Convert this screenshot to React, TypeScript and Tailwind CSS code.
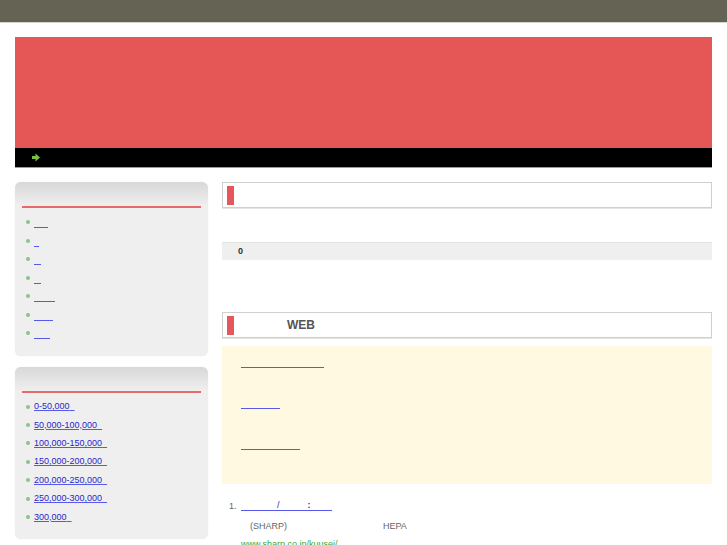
import React from 'react';

// Japanese labels do not render in the source page, so link text is shown as blank underlined runs.
const menuLinks = ['w-[14px]', 'w-[5px]', 'w-[7px]', 'w-[7px]', 'w-[21px]', 'w-[19px]', 'w-[16px]'];

const priceLinks = [
  '0-50,000',
  '50,000-100,000',
  '100,000-150,000',
  '150,000-200,000',
  '200,000-250,000',
  '250,000-300,000',
  '300,000',
];

const featureLinks = ['w-[83px]', 'w-[39px]', 'w-[59px]'];

const Dot = () => <span className="mr-[4px] inline-block h-[4px] w-[4px] shrink-0 rounded-full bg-[#86c686]" />;

const SideBox: React.FC<{ children: React.ReactNode }> = ({ children }) => (
  <div className="rounded-[6px] bg-[#efefef] shadow-[0_0_1px_rgba(0,0,0,0.12)]">
    <div className="h-[24px] rounded-t-[6px] bg-linear-to-b from-[#d8d8d8] to-[#efefef]" />
    <div className="mx-[7px] h-[2px] bg-[#e86a6a]" />
    <ul className="pt-[5px] pb-[13px] pl-[11px]">{children}</ul>
  </div>
);

const Heading: React.FC<{ children?: React.ReactNode }> = ({ children }) => (
  <div className="flex h-[26px] items-center border border-[#cfcfcf] bg-white pl-[4px] shadow-[0_1px_0_#e4e4e4]">
    <span className="h-[19px] w-[7px] bg-[#e5575a]" />
    {children}
  </div>
);

export default function App() {
  return (
    <div className="min-h-[545px] bg-white font-['Liberation_Sans',Arial,sans-serif] text-[9px] text-[#666]">
      {/* top strip */}
      <div className="h-[23px] border-b border-[#d6d5cc] bg-[#656354]" />

      {/* banner */}
      <div className="mx-[15px] mt-[14px]">
        <div className="h-[111px] bg-[#e45756]" />
        <div className="flex h-[20px] items-center border-b border-[#9a9a9a] bg-black pl-[17px]">
          <svg width="8" height="9" viewBox="0 0 8 9">
            <path d="M0 3h3.5V0.5L8 4.5 3.5 8.5V6H0z" fill="#78c043" />
          </svg>
        </div>
      </div>

      <div className="mx-[15px] mt-[14px] flex gap-[14px]">
        {/* sidebar */}
        <aside className="flex w-[193px] shrink-0 flex-col gap-[11px]">
          <SideBox>
            {menuLinks.map((w, i) => (
              <li key={i} className="flex h-[18.5px] items-center">
                <Dot />
                <a href="#" className={`inline-block h-[12px] border-b border-[#5858ea] leading-[10px] ${w}`}>
                  &nbsp;
                </a>
              </li>
            ))}
          </SideBox>
          <SideBox>
            {priceLinks.map((p) => (
              <li key={p} className="flex h-[18.4px] items-center">
                <Dot />
                <a href="#" className="text-[9px] leading-[11px] text-[#2727c8] underline decoration-[#5858ea] underline-offset-[1px]">
                  {p}&nbsp;&nbsp;
                </a>
              </li>
            ))}
          </SideBox>
        </aside>

        {/* main column */}
        <main className="flex min-w-0 flex-1 flex-col">
          <Heading />

          <div className="mt-[34px] flex h-[18px] items-center border-t border-[#e2e2e2] bg-[#efefef] pl-[16px] font-bold text-[#333]">
            0
          </div>

          <div className="mt-[52px]">
            <Heading>
              <span className="ml-[53px] text-[12px] font-bold text-[#555]">WEB</span>
            </Heading>
          </div>

          <div className="mt-[8px] flex flex-col gap-[30px] bg-[#fef9e0] pt-[11px] pb-[34px] pl-[19px]">
            {featureLinks.map((w, i) => (
              <a key={i} href="#" className={`block h-[11px] border-b border-[#5858ea] leading-[10px] ${w}`}>
                &nbsp;
              </a>
            ))}
          </div>

          <div className="mt-[16px] flex items-end pl-[7px]">
            <span className="w-[12px] leading-[10px]">1.</span>
            <a href="#" className="inline-block h-[11px] w-[91px] border-b border-[#5858ea] leading-[10px] text-[#2727c8]">
              <span className="ml-[36px]">/</span>
              <span className="ml-[28px] font-bold">:</span>
            </a>
          </div>
          <p className="mt-[9px] pl-[28px] leading-[12px]">
            (SHARP)<span className="ml-[96px]">HEPA</span>
          </p>
          <a href="#" className="mt-[6px] pl-[19px] leading-[12px] text-[#3aa63a] underline">
            www.sharp.co.jp/kuusei/
          </a>
        </main>
      </div>
    </div>
  );
}
